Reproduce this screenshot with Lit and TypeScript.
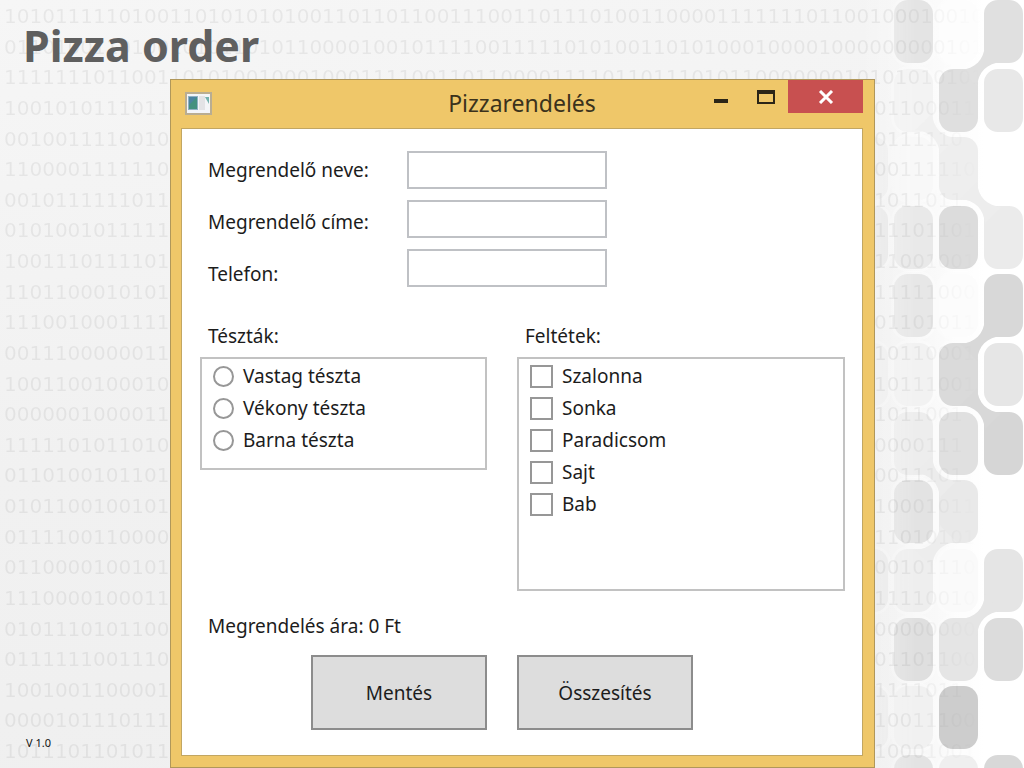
import { LitElement, html, css, svg } from "lit";
import { customElement } from "lit/decorators.js";

const TOP_ROWS = [
  "10101111101001101010101001101101100111001101110100110000111111101100100010010010",
  "0110100110100101011010110000100101111001111101010011010100010000100000000010100",
  "11111110110011010100100010001111001101100001111011011101011000000010101010101",
];

const SIDE_ROWS: [string, string][] = [
  ["1001010111011", "01100011"],
  ["0010011110010", "0111110"],
  ["1100001111110", "00111110"],
  ["0010111111011", "1011011"],
  ["0101001011111", "11101101"],
  ["1001110111101", "11001001"],
  ["1101100010101", "11111000"],
  ["1110010001111", "01101011"],
  ["0011100000011", "10110001"],
  ["1001100100010", "10111001"],
  ["0000001000011", "1011001"],
  ["1111101011010", "0000111"],
  ["0110100101101", "0011101"],
  ["0101100100101", "10001011"],
  ["0111100110000", "11010101"],
  ["0110000100101", "00101110"],
  ["1110000100011", "11110010"],
  ["0101110101100", "00000000"],
  ["0111111001110", "01101100"],
  ["1001001100001", "1111011"],
  ["0000101110111", "10011100"],
  ["1011101101011", "10001001"],
];

// x, y, fill
const TILES: [number, number, string][] = [
  [849, 137, "#eeeeee"], [849, 206, "#e6e6e6"], [849, 343, "#efefef"],
  [849, 549, "#e9e9e9"], [849, 686, "#ececec"],
  [894, 0, "#e4e4e4"], [894, 69, "#f3f3f3"], [894, 137, "#f8f8f8"],
  [894, 206, "#e9e9e9"], [894, 274, "#e7e7e7"], [894, 343, "#f2f2f2"],
  [894, 412, "#ededed"], [894, 480, "#e3e3e3"], [894, 549, "#eeeeee"],
  [894, 618, "#dfdfdf"], [894, 686, "#f1f1f1"], [894, 755, "#e3e3e3"],
  [939, 0, "#fdfdfd"], [939, 274, "#fcfcfc"], [939, 549, "#fafafa"],
  [939, 69, "#dfdfdf"], [939, 137, "#eeeeee"], [939, 206, "#dcdcdc"],
  [939, 343, "#dadada"], [939, 412, "#e0e0e0"], [939, 480, "#e9e9e9"],
  [939, 618, "#e5e5e5"], [939, 686, "#cdcdcd"], [939, 755, "#efefef"],
  [984, 0, "#e0e0e0"], [984, 69, "#e8e8e8"], [984, 206, "#ebebeb"],
  [984, 274, "#d8d8d8"], [984, 343, "#e6e6e6"], [984, 412, "#d6d6d6"],
  [984, 549, "#e5e5e5"], [984, 618, "#dcdcdc"], [984, 755, "#d8d8d8"],
];

// joint centre x, y, rising (1) or falling (-1), fill
const JOINTS: [number, number, number, string][] = [
  [981, 66, 1, "#e0e0e0"],
  [936, 134, -1, "#f0f0f0"],
  [981, 203, -1, "#ededed"],
  [981, 340, 1, "#d8d8d8"],
  [981, 409, -1, "#d8d8d8"],
  [936, 477, -1, "#ececec"],
  [936, 546, 1, "#ededed"],
  [981, 615, 1, "#e5e5e5"],
];

const tile = ([x, y, fill]: [number, number, string]) =>
  svg`<rect x=${x} y=${y} width="39" height="63" rx="14" fill=${fill}
    stroke="#fff" stroke-opacity=".3" stroke-width="6" paint-order="stroke"/>`;

const joint = ([x, y, dir, fill]: [number, number, number, string]) =>
  svg`<path transform=${`translate(${x} ${y}) scale(${dir} 1)`} fill=${fill}
    d="M4 -21C3 -6 -6 3 -21 4L-12 12L-4 21C-3 6 6 -3 21 -4L12 -12Z"/>`;

@customElement("slide-backdrop")
export class SlideBackdrop extends LitElement {
  static styles = css`
    :host {
      display: block;
      overflow: hidden;
      background: linear-gradient(90deg, transparent 84%, #fff 96%),
        linear-gradient(170deg, #f6f6f6, #f1f1f1 50%, #efefef);
    }
    .tiles {
      position: absolute;
      top: 0;
      right: 0;
      width: 180px;
      height: 768px;
    }
    .digits {
      position: absolute;
      inset: 0;
      display: flex;
      flex-direction: column;
      justify-content: space-between;
      padding: 4px 0 5px 4px;
      font: 400 20px/24px "DejaVu Sans", sans-serif;
      color: rgba(0, 0, 0, 0.06);
      white-space: nowrap;
      -webkit-mask-image: linear-gradient(90deg, #000 88%, transparent 96%);
      mask-image: linear-gradient(90deg, #000 88%, transparent 96%);
    }
    .row {
      display: grid;
      grid-template-columns: 1fr 150px;
      height: 24px;
    }
  `;

  render() {
    return html`
      <svg class="tiles" viewBox="844 0 180 768" aria-hidden="true">
        <defs>
          <linearGradient id="fade" x1="849" x2="915" y1="0" y2="0" gradientUnits="userSpaceOnUse">
            <stop offset="0" stop-color="#fff" stop-opacity=".1" />
            <stop offset="1" stop-color="#fff" />
          </linearGradient>
          <mask id="veil" maskUnits="userSpaceOnUse" x="844" y="0" width="180" height="768">
            <rect x="844" width="180" height="768" fill="url(#fade)" />
          </mask>
        </defs>
        <g mask="url(#veil)">${TILES.map(tile)}${JOINTS.map(joint)}</g>
      </svg>
      <div class="digits" aria-hidden="true">
        ${TOP_ROWS.map((r) => html`<div>${r}</div>`)}
        ${SIDE_ROWS.map(([l, r]) => html`<div class="row"><span>${l}</span><span>${r}</span></div>`)}
      </div>
    `;
  }
}

@customElement("order-window")
export class OrderWindow extends LitElement {
  static styles = css`
    :host {
      display: block;
      box-sizing: border-box;
      border: 1px solid #b0975a;
      padding: 0 11px 11px 10px;
      background: #efc769;
      color: #1c1c1c;
      font: 19px/24px "Noto Sans", sans-serif;
    }
    * {
      box-sizing: border-box;
    }
    .bar {
      display: grid;
      grid-template-columns: 1fr auto 1fr;
      height: 48px;
    }
    .app-icon {
      margin: 12px 0 0 4px;
    }
    .caption {
      margin: 0;
      padding-top: 9px;
      font-size: 23px;
      line-height: 28px;
      font-weight: 400;
      color: #3b321c;
    }
    .controls {
      display: flex;
      justify-content: flex-end;
      align-items: flex-start;
    }
    .control {
      width: 45px;
      height: 33px;
      padding: 0;
      border: 0;
      background: none;
      display: grid;
      place-items: center;
    }
    .close {
      width: 75px;
      background: #c85050;
    }
    .client {
      border: 1px solid #c2a662;
      background: #fff;
      padding: 22px 17px 25px 18px;
    }
    .fields {
      display: grid;
      grid-template-columns: 199px 200px;
      padding-left: 8px;
    }
    .labels,
    .inputs {
      display: flex;
      flex-direction: column;
      gap: 11px;
    }
    .labels {
      gap: 14px;
      line-height: 38px;
    }
    .inputs input {
      width: 100%;
      height: 38px;
      border: 2px solid #bfc1c5;
      background: #fff;
      font: inherit;
      padding: 0 8px;
    }
    .columns {
      display: grid;
      grid-template-columns: 287fr 328fr;
      column-gap: 30px;
      align-items: start;
    }
    .choices {
      margin-top: 31px;
    }
    fieldset {
      border: 0;
      margin: 0;
      padding: 0;
      min-width: 0;
    }
    legend {
      padding: 0 8px;
      margin-bottom: 9px;
    }
    .list {
      border: 2px solid #c2c2c2;
      height: 113px;
      padding: 1px 11px;
    }
    .tall {
      height: 234px;
    }
    .option {
      display: flex;
      align-items: center;
      gap: 9px;
      height: 32px;
    }
    .option input {
      appearance: none;
      margin: 0;
      width: 23px;
      height: 23px;
      border: 2px solid #979797;
      background: #fff;
    }
    .option input[type="radio"] {
      width: 21px;
      height: 21px;
      border-radius: 50%;
    }
    .option input:checked {
      background: #555;
      box-shadow: inset 0 0 0 3px #fff;
    }
    .total {
      margin: 23px 8px 17px;
    }
    .push {
      width: 176px;
      height: 75px;
      border: 2px solid #8c8c8c;
      background: #ddd;
      color: inherit;
      font: inherit;
    }
    .save {
      justify-self: end;
    }
  `;

  private option(type: string, name: string, label: string) {
    return html`<label class="option"><input type=${type} name=${name} />${label}</label>`;
  }

  render() {
    return html`
      <header class="bar">
        <svg class="app-icon" width="27" height="24" viewBox="0 0 27 24" aria-hidden="true">
          <rect x="1" y="1" width="25" height="21" fill="#f4f5f8" stroke="#b9ad92" stroke-width="2" />
          <rect x="3" y="4" width="10" height="14" fill="#8fb0c4" />
          <rect x="4" y="5" width="8" height="12" fill="#43917f" />
          <path d="M4 5h8L4 13z" fill="#4b83a0" />
          <path d="M14 4h6v14h-6z" fill="#e3e3e6" />
          <path d="M20 5h4v7z" fill="#74b2ae" />
        </svg>
        <h2 class="caption">Pizzarendelés</h2>
        <div class="controls">
          <button class="control" aria-label="Minimize">
            <svg width="14" height="14" viewBox="0 0 14 14"><path d="M0 9h14v4H0z" fill="#2b2517" /></svg>
          </button>
          <button class="control" aria-label="Maximize">
            <svg width="18" height="14" viewBox="0 0 18 14">
              <path d="M0 0h18v14H0zM2 4v8h14V4z" fill="#2b2517" fill-rule="evenodd" />
            </svg>
          </button>
          <button class="control close" aria-label="Close">
            <svg width="16" height="14" viewBox="0 0 16 14">
              <path d="M2 1l12 12M14 1L2 13" stroke="#fff" stroke-width="3" />
            </svg>
          </button>
        </div>
      </header>
      <form class="client" @submit=${(e: Event) => e.preventDefault()}>
        <div class="fields">
          <div class="labels">
            <label for="name">Megrendelő neve:</label>
            <label for="address">Megrendelő címe:</label>
            <label for="phone">Telefon:</label>
          </div>
          <div class="inputs">
            <input id="name" type="text" />
            <input id="address" type="text" />
            <input id="phone" type="tel" />
          </div>
        </div>
        <div class="columns choices">
          <fieldset>
            <legend>Tészták:</legend>
            <div class="list">
              ${["Vastag tészta", "Vékony tészta", "Barna tészta"].map((t) => this.option("radio", "dough", t))}
            </div>
          </fieldset>
          <fieldset>
            <legend>Feltétek:</legend>
            <div class="list tall">
              ${["Szalonna", "Sonka", "Paradicsom", "Sajt", "Bab"].map((t) => this.option("checkbox", "topping", t))}
            </div>
          </fieldset>
        </div>
        <p class="total">Megrendelés ára: 0 Ft</p>
        <div class="columns">
          <button class="push save">Mentés</button>
          <button class="push" type="button">Összesítés</button>
        </div>
      </form>
    `;
  }
}

@customElement("app-root")
export class AppRoot extends LitElement {
  static styles = css`
    :host {
      display: block;
      position: relative;
      min-height: 100vh;
      overflow: hidden;
      font-family: "Noto Sans", sans-serif;
    }
    .backdrop {
      position: absolute;
      inset: 0;
    }
    .slide {
      position: relative;
      display: grid;
      grid-template-columns: 170px 1fr 149px;
      grid-template-rows: 79px auto;
    }
    .title {
      grid-column: 1 / -1;
      margin: 0;
      padding: 16px 23px 0;
      font-size: 43px;
      line-height: 60px;
      font-weight: 700;
      color: #5f5f5f;
    }
    .version {
      align-self: end;
      margin: 0;
      padding: 0 0 17px 26px;
      font-size: 11px;
      line-height: 16px;
      color: #111;
    }
  `;

  render() {
    return html`
      <slide-backdrop class="backdrop"></slide-backdrop>
      <main class="slide">
        <h1 class="title">Pizza order</h1>
        <p class="version">V 1.0</p>
        <order-window></order-window>
      </main>
    `;
  }
}
